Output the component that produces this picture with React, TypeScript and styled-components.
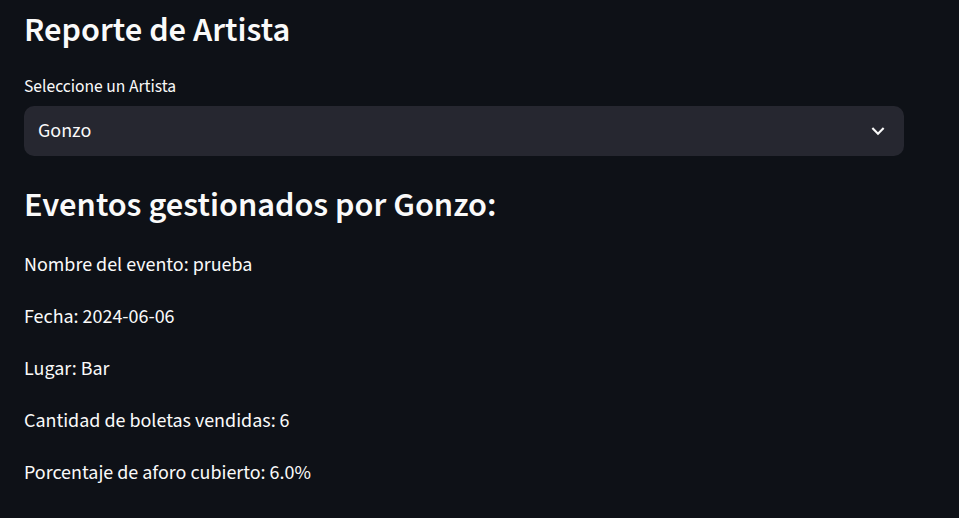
import React from "react";
import styled, { createGlobalStyle } from "styled-components";

const GlobalStyle = createGlobalStyle`
  html, body {
    margin: 0;
    padding: 0;
    background: #0e1117;
  }
  body {
    font-family: "Source Sans 3", "Source Sans Pro", "Noto Sans", sans-serif;
    color: #fafafa;
  }
  #root {
    min-height: 518px;
  }
`;

const Page = styled.main`
  min-height: 518px;
  background: #0e1117;
  padding: 0 24px;
  box-sizing: border-box;
`;

const Block = styled.div`
  width: 880px;
  display: flex;
  flex-direction: column;
`;

const Heading = styled.h2<{ $top: number }>`
  margin: ${(p) => p.$top}px 0 0 0;
  font-size: 34.5px;
  font-weight: 600;
  line-height: 41.4px;
  color: #fafafa;
  letter-spacing: 0;
`;

const Label = styled.label`
  margin-top: 22px;
  font-size: 17.5px;
  line-height: 28px;
  color: #fafafa;
`;

const SelectBox = styled.div`
  margin-top: 5px;
  height: 50px;
  box-sizing: border-box;
  background: #262730;
  border-radius: 10px;
  display: flex;
  align-items: center;
  justify-content: space-between;
  padding: 0 14px 0 14px;
`;

const SelectValue = styled.span`
  font-size: 20px;
  line-height: 32px;
  color: #fafafa;
`;

const Chevron = styled.svg`
  width: 24px;
  height: 24px;
  display: block;
  fill: #fafafa;
`;

const List = styled.div`
  margin-top: 22px;
  display: flex;
  flex-direction: column;
  gap: 20px;
`;

const Para = styled.p`
  margin: 0;
  font-size: 20px;
  line-height: 32px;
  color: #fafafa;
`;

const items = [
  "Nombre del evento: prueba",
  "Fecha: 2024-06-06",
  "Lugar: Bar",
  "Cantidad de boletas vendidas: 6",
  "Porcentaje de aforo cubierto: 6.0%",
];

export default function App() {
  return (
    <>
      <GlobalStyle />
      <Page>
        <Block>
          <Heading $top={9.5}>Reporte de Artista</Heading>
          <Label>Seleccione un Artista</Label>
          <SelectBox>
            <SelectValue>Gonzo</SelectValue>
            <Chevron viewBox="0 0 24 24" aria-hidden="true">
              <path d="M7.1 8.3L12 13.2l4.9-4.9L18.4 9.8 12 16.2 5.6 9.8z" />
            </Chevron>
          </SelectBox>
          <Heading $top={29.5}>Eventos gestionados por Gonzo:</Heading>
          <List>
            {items.map((t) => (
              <Para key={t}>{t}</Para>
            ))}
          </List>
        </Block>
      </Page>
    </>
  );
}
